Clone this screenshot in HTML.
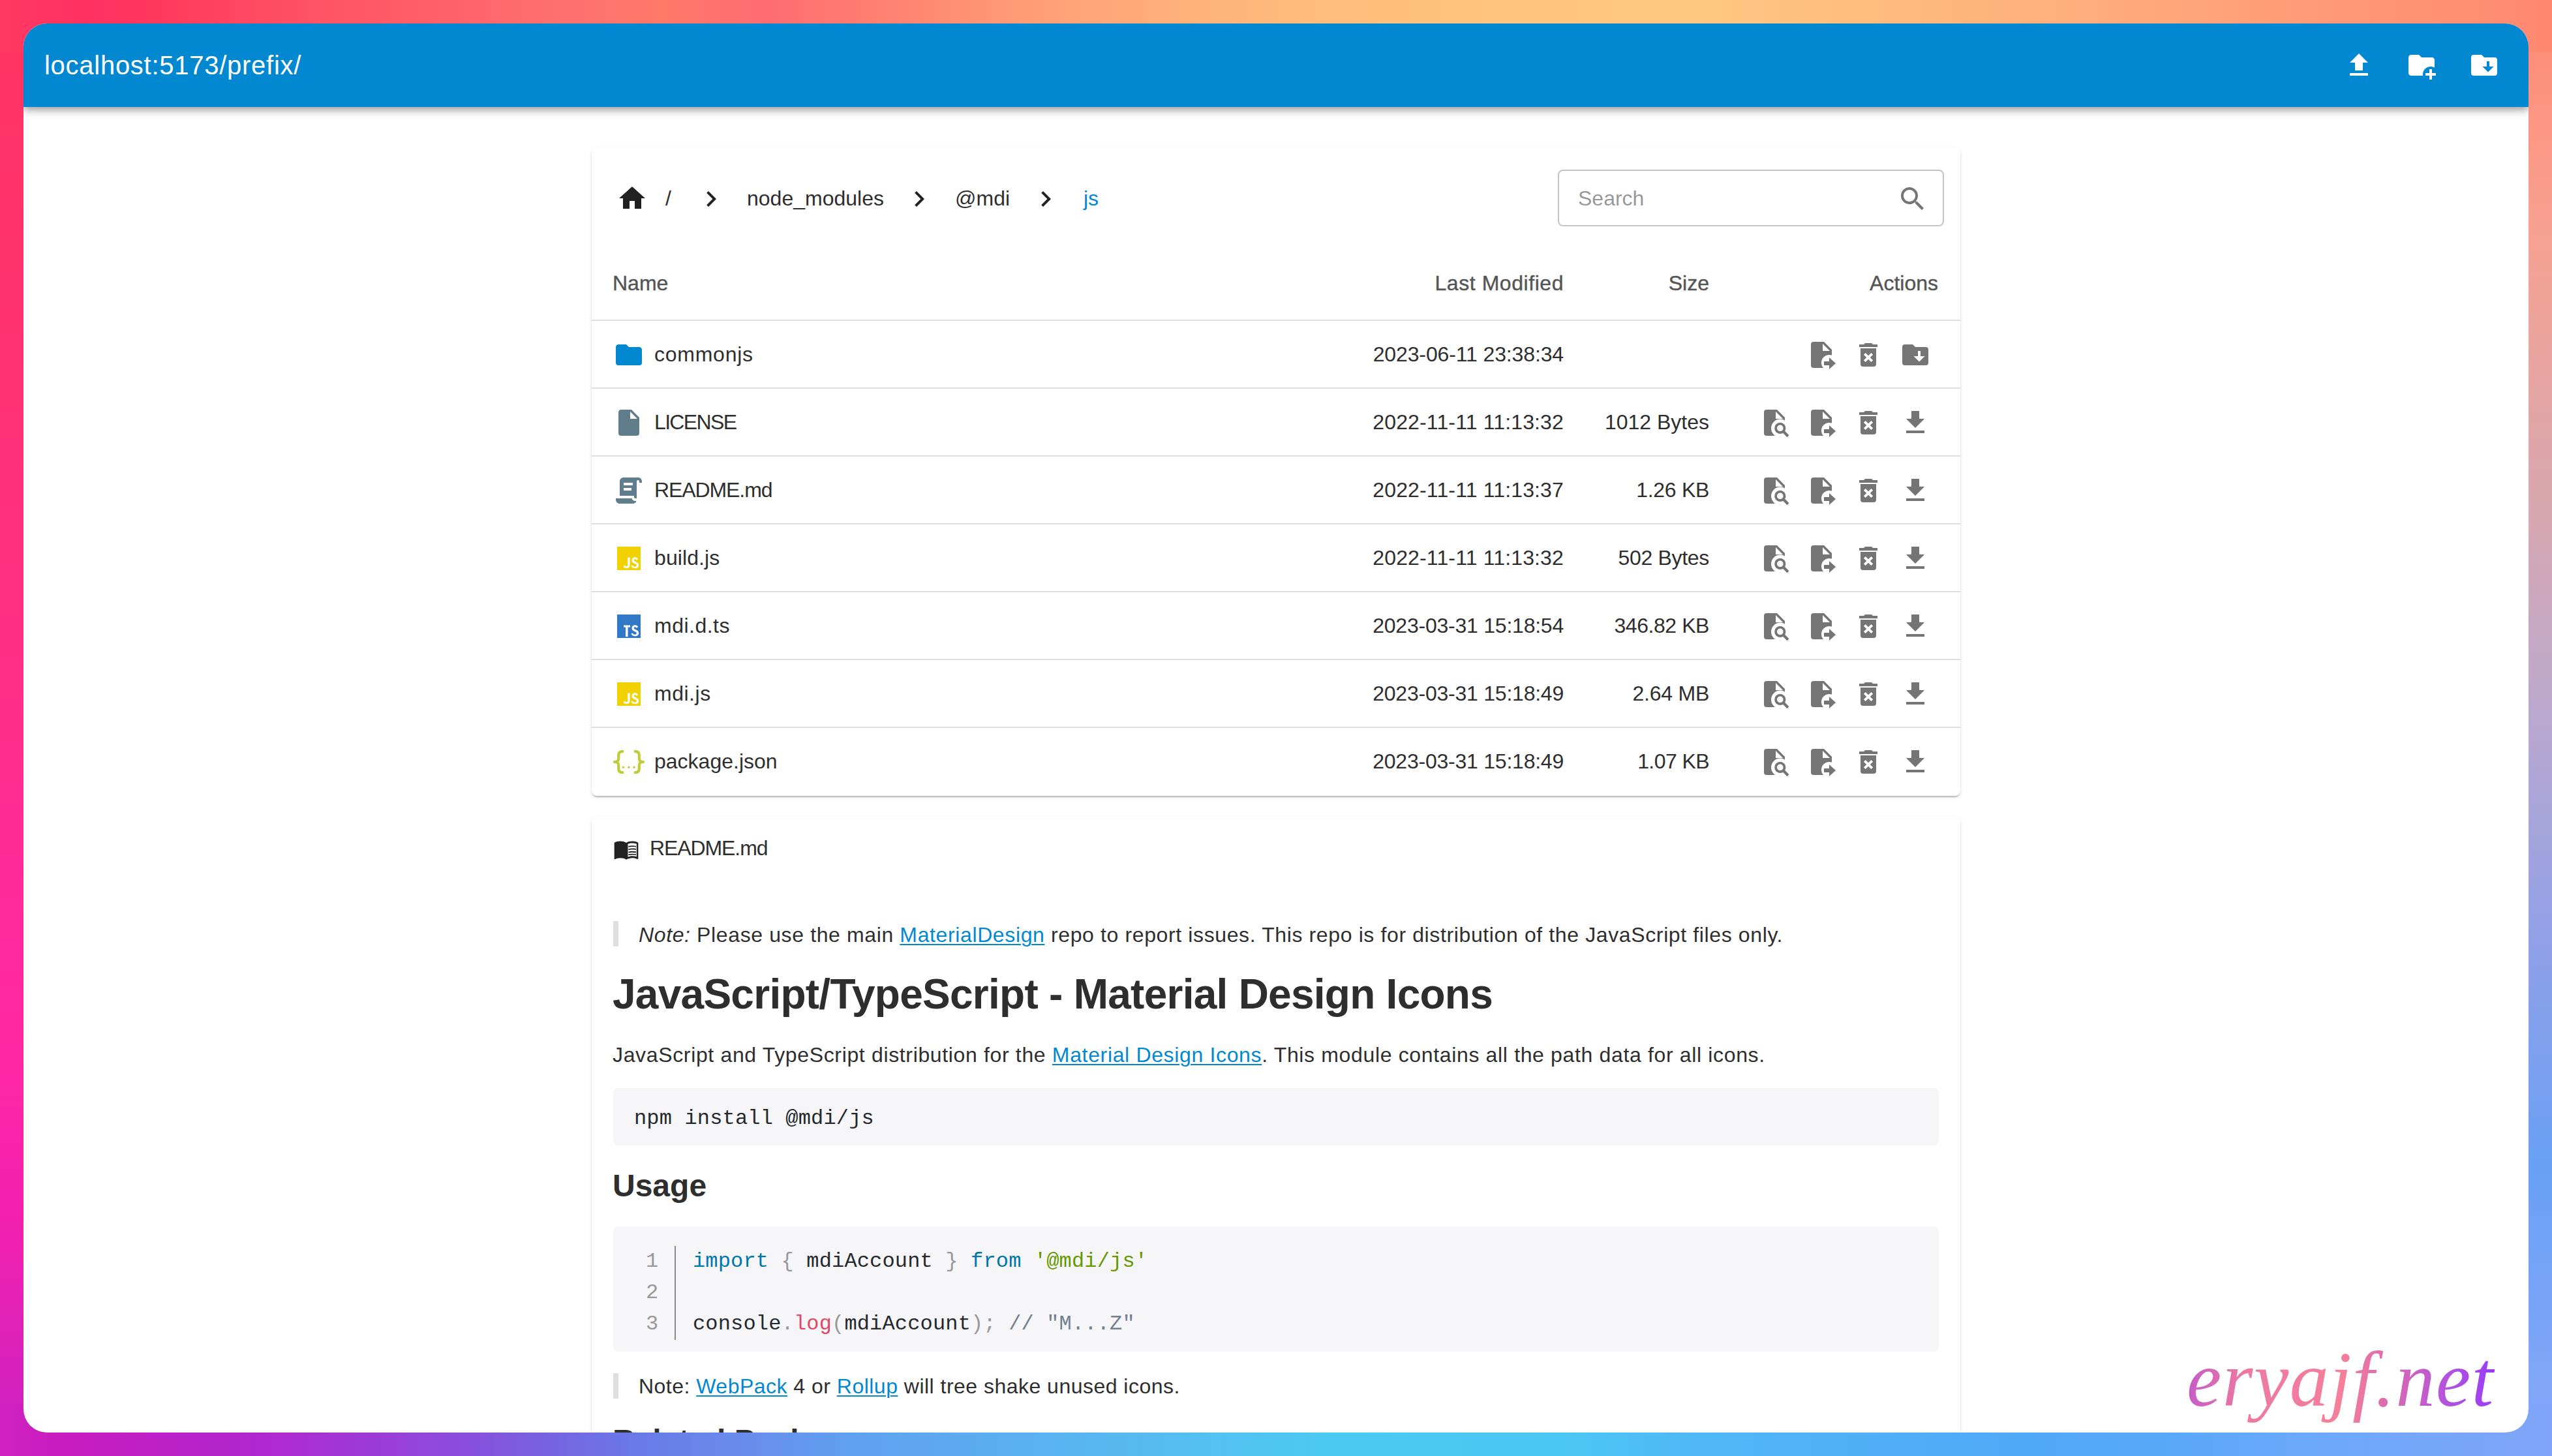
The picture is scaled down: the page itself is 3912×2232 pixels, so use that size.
<!DOCTYPE html>
<html><head><meta charset="utf-8">
<style>
*{box-sizing:border-box;margin:0;padding:0}
html,body{width:3912px;height:2232px;overflow:hidden}
body{position:relative;font-family:"Liberation Sans",sans-serif;background:#5ab0f5}
.bgs{position:absolute}
.bgL{left:0;top:0;width:80px;height:2232px;background:linear-gradient(to bottom,#ff3560 0%,#ff3370 20%,#ff3080 40%,#ff2c98 60%,#ff28a4 72%,#f020b0 85%,#c824c4 100%)}
.bgR{left:3832px;top:0;width:80px;height:2232px;background:linear-gradient(to bottom,#ff8a72 0%,#f8a090 15%,#d8a8b0 35%,#b8a8d0 50%,#90a0e8 65%,#6aa0f4 80%,#88a8f8 100%)}
.bgT{left:0;top:0;width:3912px;height:80px;background:linear-gradient(to right,#ff3a62 0%,#ff3060 3.2%,#ff3a5e 6.5%,#ff5066 11.7%,#ff6068 16.9%,#ff7070 22.1%,#ff7868 26%,#ff6c72 30%,#ff7a70 33.2%,#ffa078 41%,#ffb47a 47.5%,#ffc27c 55.4%,#ffc880 66.5%,#ffb87c 75.6%,#ffaa7c 83.5%,#ff9878 91.4%,#ff8870 100%)}
.bgB{left:0;top:2152px;width:3912px;height:80px;background:linear-gradient(to right,#d020c0 0%,#c81cc0 2.6%,#b028d0 10.4%,#9840d8 15.6%,#7a5ee0 20.8%,#6a78e8 24.7%,#6890ec 30%,#60a0f0 33.2%,#58b8f0 43.5%,#4ccaf2 52.4%,#4cc6f4 61.3%,#50b8f6 66.5%,#50a8f6 79.2%,#58a8f8 84.4%,#70a8fa 92%,#80a5f8 100%)}
.win{position:absolute;left:36px;top:36px;width:3840px;height:2160px;border-radius:36px;overflow:hidden;background:#fff}
.appbar{position:absolute;left:0;top:0;width:3840px;height:128px;background:#0288d1;z-index:5;
 box-shadow:0 4px 8px -2px rgba(0,0,0,.2),0 8px 10px 0 rgba(0,0,0,.14),0 2px 20px 0 rgba(0,0,0,.12)}
.title{position:absolute;left:32px;top:0;height:128px;line-height:128px;color:#fff;font-size:40px;white-space:nowrap}
.ico{position:absolute;width:48px;height:48px}
.ico svg{width:48px;height:48px;display:block}
.card{position:absolute;left:871px;width:2098px;background:#fff;border-radius:8px;
 box-shadow:0 4px 2px -2px rgba(0,0,0,.13),0 2px 2px 0 rgba(0,0,0,.1),0 2px 6px 0 rgba(0,0,0,.1)}
.t{position:absolute;white-space:nowrap;font-size:32px;line-height:48px;color:#2e2e2e}
.hdr{color:#555;-webkit-text-stroke:0.4px #555}
.div{position:absolute;left:0;width:2098px;height:2px;background:#e0e0e0}
.r{text-align:right}

.bq{position:absolute;left:33px;width:8px;height:39px;background:#dfdfdf}
.md{color:#2e2e2e}
.md a{color:#0288d1;text-decoration:underline;text-underline-offset:3px;text-decoration-thickness:2px}
.h1{font-size:64px;font-weight:bold;line-height:80px}
.h2{font-size:48px;font-weight:bold;line-height:64px}
.code{position:absolute;left:33px;width:2032px;background:#f6f6f8;border-radius:8px}
.mono{position:absolute;white-space:nowrap;font-family:"Liberation Mono",monospace;font-size:32px;line-height:48px;color:#24292e;letter-spacing:0.16px}
.ln{color:#999}
.kw{color:#07a}.pu{color:#999}.st{color:#690}.fn{color:#dd4a68}.cm{color:#708090}
</style></head><body>
<div class="bgs bgL"></div><div class="bgs bgR"></div><div class="bgs bgT"></div><div class="bgs bgB"></div>
<div class="win">
 <div class="appbar">
  <div class="title" id="title" style="letter-spacing:0.73px">localhost:5173/prefix/</div>
  <div class="ico" style="left:3556px;top:40px"><svg viewBox="0 0 24 24"><path fill="#fff" d="M9,16V10H5L12,3L19,10H15V16H9M5,20V18H19V20H5Z"/></svg></div>
  <div class="ico" style="left:3652px;top:40px"><svg viewBox="0 0 24 24"><path fill="#fff" d="M13 19C13 19.34 13.04 19.67 13.09 20H4C2.9 20 2 19.11 2 18V6C2 4.89 2.89 4 4 4H10L12 6H20C21.1 6 22 6.89 22 8V13.81C21.12 13.3 20.1 13 19 13C15.690 13 13 15.69 13 19M20 18V15H18V18H15V20H18V23H20V20H23V18H20Z"/></svg></div>
  <div class="ico" style="left:3748px;top:40px"><svg viewBox="0 0 24 24"><path fill="#fff" d="M20,6A2,2 0 0,1 22,8V18A2,2 0 0,1 20,20H4A2,2 0 0,1 2,18V6A2,2 0 0,1 4,4H10L12,6H20M19.25,13H16V9H14V13H10.75L15,17.25L19.25,13Z"/></svg></div>
 </div>

 <div class="card" id="card1" style="top:190px;height:994px">
  <!-- breadcrumb -->
  <div class="ico" style="left:38px;top:54px"><svg viewBox="0 0 24 24"><path fill="#212121" d="M10,20V14H14V20H19V12H22L12,3L2,12H5V20H10Z"/></svg></div>
  <div class="t" id="bc0" style="left:113px;top:54px">/</div>
  <div class="ico" style="left:159px;top:55px"><svg viewBox="0 0 24 24"><path fill="#212121" d="M8.59,16.58L13.17,12L8.59,7.41L10,6L16,12L10,18L8.59,16.58Z"/></svg></div>
  <div class="t" id="bc1" style="left:238px;top:54px">node_modules</div>
  <div class="ico" style="left:478px;top:55px"><svg viewBox="0 0 24 24"><path fill="#212121" d="M8.59,16.58L13.17,12L8.59,7.41L10,6L16,12L10,18L8.59,16.58Z"/></svg></div>
  <div class="t" id="bc2" style="left:557px;top:54px">@mdi</div>
  <div class="ico" style="left:672px;top:55px"><svg viewBox="0 0 24 24"><path fill="#212121" d="M8.59,16.58L13.17,12L8.59,7.41L10,6L16,12L10,18L8.59,16.58Z"/></svg></div>
  <div class="t" id="bc3" style="left:754px;top:54px;color:#0288d1">js</div>
  <!-- search -->
  <div style="position:absolute;left:1481px;top:34px;width:592px;height:87px;border:2px solid #c4c4c4;border-radius:8px"></div>
  <div class="t" id="srch" style="left:1512px;top:54px;color:rgba(0,0,0,.42)">Search</div>
  <div class="ico" style="left:2001px;top:55px"><svg viewBox="0 0 24 24"><path fill="#757575" d="M9.5,3A6.5,6.5 0 0,1 16,9.5C16,11.11 15.41,12.59 14.44,13.73L14.71,14H15.5L20.5,19L19,20.5L14,15.5V14.71L13.73,14.44C12.59,15.41 11.11,16 9.5,16A6.5,6.5 0 0,1 3,9.5A6.5,6.5 0 0,1 9.5,3M9.5,5C7,5 5,7 5,9.5C5,12 7,14 9.5,14C12,14 14,12 14,9.5C14,7 12,5 9.5,5Z"/></svg></div>
  <!-- header -->
  <div class="t hdr" style="left:32px;top:184px">Name</div>
  <div class="t hdr r" style="right:608px;top:184px;letter-spacing:0.55px">Last Modified</div>
  <div class="t hdr r" style="right:385px;top:184px">Size</div>
  <div class="t hdr r" style="right:34px;top:184px">Actions</div>
  <div class="div" style="top:264px"></div>
  <div class="ico" style="left:33px;top:294px;width:48px;height:48px"><svg viewBox="0 0 24 24"><path fill="#0288d1" d="M10,4H4C2.89,4 2,4.89 2,6V18A2,2 0 0,0 4,20H20A2,2 0 0,0 22,18V8C22,6.89 21.1,6 20,6H12L10,4Z"/></svg></div>
  <div class="t" style="left:96px;top:293px;letter-spacing:0.75px">commonjs</div>
  <div class="t r" style="right:608px;top:293px;letter-spacing:-0.13px">2023-06-11 23:38:34</div>
  <div class="ico" style="left:1861px;top:294px;width:48px;height:48px"><svg viewBox="0 0 24 24"><defs><mask id="mfm0"><rect width="24" height="24" fill="#fff"/><circle cx="18" cy="18" r="6" fill="#000"/><path d="M13,9V3.5L18.5,9Z" fill="#000"/></mask></defs><path mask="url(#mfm0)" fill="#757575" d="M6,2H14L20,8V20A2,2 0 0,1 18,22H6A2,2 0 0,1 4,20V4A2,2 0 0,1 6,2Z"/><path fill="#757575" d="M14,17H18V14L23,18.5L18,23V20H14V17Z"/></svg></div>
  <div class="ico" style="left:1933px;top:294px;width:48px;height:48px"><svg viewBox="0 0 24 24"><path fill="#757575" d="M6,19A2,2 0 0,0 8,21H16A2,2 0 0,0 18,19V7H6V19M8.46,11.88L9.87,10.47L12,12.59L14.12,10.47L15.53,11.88L13.41,14L15.53,16.12L14.12,17.53L12,15.41L9.88,17.53L8.47,16.12L10.59,14L8.46,11.88M15.5,4L14.5,3H9.5L8.5,4H5V6H19V4H15.5Z"/></svg></div>
  <div class="ico" style="left:2005px;top:294px;width:48px;height:48px"><svg viewBox="0 0 24 24"><path fill="#757575" d="M20,6A2,2 0 0,1 22,8V18A2,2 0 0,1 20,20H4A2,2 0 0,1 2,18V6A2,2 0 0,1 4,4H10L12,6H20M19.25,13H16V9H14V13H10.75L15,17.25L19.25,13Z"/></svg></div>
  <div class="div" style="top:368px"></div>
  <div class="ico" style="left:33px;top:398px;width:48px;height:48px"><svg viewBox="0 0 24 24"><path fill="#607d8b" d="M13,9V3.5L18.5,9M6,2C4.89,2 4,2.89 4,4V20A2,2 0 0,0 6,22H18A2,2 0 0,0 20,20V8L14,2H6Z"/></svg></div>
  <div class="t" style="left:96px;top:397px;letter-spacing:-1.66px">LICENSE</div>
  <div class="t r" style="right:608px;top:397px;letter-spacing:0.14px">2022-11-11 11:13:32</div>
  <div class="t r" style="right:385px;top:397px;letter-spacing:0px">1012 Bytes</div>
  <div class="ico" style="left:1789px;top:398px;width:48px;height:48px"><svg viewBox="0 0 24 24"><defs><mask id="mfs1"><rect width="24" height="24" fill="#fff"/><circle cx="16.4" cy="16.2" r="6.9" fill="#000"/><path d="M13,9V3.5L18.5,9Z" fill="#000"/></mask></defs><path mask="url(#mfs1)" fill="#757575" d="M6,2H14L20,8V20A2,2 0 0,1 18,22H6A2,2 0 0,1 4,20V4A2,2 0 0,1 6,2Z"/><circle cx="16.4" cy="16.2" r="3.35" fill="none" stroke="#757575" stroke-width="1.9"/><path d="M18.8,18.6L22.5,22.4" stroke="#757575" stroke-width="2.1" stroke-linecap="butt"/></svg></div>
  <div class="ico" style="left:1861px;top:398px;width:48px;height:48px"><svg viewBox="0 0 24 24"><defs><mask id="mfm1"><rect width="24" height="24" fill="#fff"/><circle cx="18" cy="18" r="6" fill="#000"/><path d="M13,9V3.5L18.5,9Z" fill="#000"/></mask></defs><path mask="url(#mfm1)" fill="#757575" d="M6,2H14L20,8V20A2,2 0 0,1 18,22H6A2,2 0 0,1 4,20V4A2,2 0 0,1 6,2Z"/><path fill="#757575" d="M14,17H18V14L23,18.5L18,23V20H14V17Z"/></svg></div>
  <div class="ico" style="left:1933px;top:398px;width:48px;height:48px"><svg viewBox="0 0 24 24"><path fill="#757575" d="M6,19A2,2 0 0,0 8,21H16A2,2 0 0,0 18,19V7H6V19M8.46,11.88L9.87,10.47L12,12.59L14.12,10.47L15.53,11.88L13.41,14L15.53,16.12L14.12,17.53L12,15.41L9.88,17.53L8.47,16.12L10.59,14L8.46,11.88M15.5,4L14.5,3H9.5L8.5,4H5V6H19V4H15.5Z"/></svg></div>
  <div class="ico" style="left:2005px;top:398px;width:48px;height:48px"><svg viewBox="0 0 24 24"><path fill="#757575" d="M5,20H19V18H5M19,9H15V3H9V9H5L12,16L19,9Z"/></svg></div>
  <div class="div" style="top:472px"></div>
  <div class="ico" style="left:33px;top:502px;width:48px;height:48px"><svg viewBox="0 0 24 24"><path fill="#607d8b" d="M17.8,20C17.4,21.2 16.3,22 15,22H5C3.3,22 2,20.7 2,19V18H5L14.2,18C14.6,19.2 15.7,20 17,20H17.8M19,2C20.7,2 22,3.3 22,5V6H20V5C20,4.4 19.6,4 19,4C18.4,4 18,4.4 18,5V18H17C16.4,18 16,17.6 16,17V16H5V5C5,3.3 6.3,2 8,2H19M8,6V8H15V6H8M8,10V12H14V10H8Z"/></svg></div>
  <div class="t" style="left:96px;top:501px;letter-spacing:-1.09px">README.md</div>
  <div class="t r" style="right:608px;top:501px;letter-spacing:0.14px">2022-11-11 11:13:37</div>
  <div class="t r" style="right:385px;top:501px;letter-spacing:-0.3px">1.26 KB</div>
  <div class="ico" style="left:1789px;top:502px;width:48px;height:48px"><svg viewBox="0 0 24 24"><defs><mask id="mfs2"><rect width="24" height="24" fill="#fff"/><circle cx="16.4" cy="16.2" r="6.9" fill="#000"/><path d="M13,9V3.5L18.5,9Z" fill="#000"/></mask></defs><path mask="url(#mfs2)" fill="#757575" d="M6,2H14L20,8V20A2,2 0 0,1 18,22H6A2,2 0 0,1 4,20V4A2,2 0 0,1 6,2Z"/><circle cx="16.4" cy="16.2" r="3.35" fill="none" stroke="#757575" stroke-width="1.9"/><path d="M18.8,18.6L22.5,22.4" stroke="#757575" stroke-width="2.1" stroke-linecap="butt"/></svg></div>
  <div class="ico" style="left:1861px;top:502px;width:48px;height:48px"><svg viewBox="0 0 24 24"><defs><mask id="mfm2"><rect width="24" height="24" fill="#fff"/><circle cx="18" cy="18" r="6" fill="#000"/><path d="M13,9V3.5L18.5,9Z" fill="#000"/></mask></defs><path mask="url(#mfm2)" fill="#757575" d="M6,2H14L20,8V20A2,2 0 0,1 18,22H6A2,2 0 0,1 4,20V4A2,2 0 0,1 6,2Z"/><path fill="#757575" d="M14,17H18V14L23,18.5L18,23V20H14V17Z"/></svg></div>
  <div class="ico" style="left:1933px;top:502px;width:48px;height:48px"><svg viewBox="0 0 24 24"><path fill="#757575" d="M6,19A2,2 0 0,0 8,21H16A2,2 0 0,0 18,19V7H6V19M8.46,11.88L9.87,10.47L12,12.59L14.12,10.47L15.53,11.88L13.41,14L15.53,16.12L14.12,17.53L12,15.41L9.88,17.53L8.47,16.12L10.59,14L8.46,11.88M15.5,4L14.5,3H9.5L8.5,4H5V6H19V4H15.5Z"/></svg></div>
  <div class="ico" style="left:2005px;top:502px;width:48px;height:48px"><svg viewBox="0 0 24 24"><path fill="#757575" d="M5,20H19V18H5M19,9H15V3H9V9H5L12,16L19,9Z"/></svg></div>
  <div class="div" style="top:576px"></div>
  <div class="ico" style="left:33px;top:606px;width:48px;height:48px"><svg viewBox="0 0 24 24"><path fill="#f1d200" d="M3,3H21V21H3V3M7.73,18.04C8.13,18.89 8.92,19.59 10.27,19.59C11.77,19.59 12.8,18.79 12.8,17.04V11.26H11.1V17C11.1,17.86 10.75,18.08 10.2,18.08C9.62,18.08 9.38,17.68 9.11,17.21L7.73,18.04M13.71,17.86C14.21,18.84 15.22,19.59 16.8,19.59C18.4,19.59 19.6,18.76 19.6,17.23C19.6,15.82 18.79,15.19 17.35,14.57L16.93,14.39C16.2,14.08 15.89,13.87 15.89,13.37C15.89,12.96 16.2,12.64 16.7,12.64C17.18,12.64 17.5,12.85 17.79,13.37L19.1,12.5C18.55,11.54 17.77,11.17 16.7,11.17C15.19,11.17 14.22,12.13 14.22,13.4C14.22,14.78 15.03,15.43 16.25,15.95L16.67,16.13C17.45,16.5 17.91,16.72 17.91,17.38C17.91,17.93 17.4,18.33 16.61,18.33C15.68,18.33 15.15,17.85 14.74,17.18L13.71,17.86Z"/></svg></div>
  <div class="t" style="left:96px;top:605px;letter-spacing:0.1px">build.js</div>
  <div class="t r" style="right:608px;top:605px;letter-spacing:0.14px">2022-11-11 11:13:32</div>
  <div class="t r" style="right:385px;top:605px;letter-spacing:-0.31px">502 Bytes</div>
  <div class="ico" style="left:1789px;top:606px;width:48px;height:48px"><svg viewBox="0 0 24 24"><defs><mask id="mfs3"><rect width="24" height="24" fill="#fff"/><circle cx="16.4" cy="16.2" r="6.9" fill="#000"/><path d="M13,9V3.5L18.5,9Z" fill="#000"/></mask></defs><path mask="url(#mfs3)" fill="#757575" d="M6,2H14L20,8V20A2,2 0 0,1 18,22H6A2,2 0 0,1 4,20V4A2,2 0 0,1 6,2Z"/><circle cx="16.4" cy="16.2" r="3.35" fill="none" stroke="#757575" stroke-width="1.9"/><path d="M18.8,18.6L22.5,22.4" stroke="#757575" stroke-width="2.1" stroke-linecap="butt"/></svg></div>
  <div class="ico" style="left:1861px;top:606px;width:48px;height:48px"><svg viewBox="0 0 24 24"><defs><mask id="mfm3"><rect width="24" height="24" fill="#fff"/><circle cx="18" cy="18" r="6" fill="#000"/><path d="M13,9V3.5L18.5,9Z" fill="#000"/></mask></defs><path mask="url(#mfm3)" fill="#757575" d="M6,2H14L20,8V20A2,2 0 0,1 18,22H6A2,2 0 0,1 4,20V4A2,2 0 0,1 6,2Z"/><path fill="#757575" d="M14,17H18V14L23,18.5L18,23V20H14V17Z"/></svg></div>
  <div class="ico" style="left:1933px;top:606px;width:48px;height:48px"><svg viewBox="0 0 24 24"><path fill="#757575" d="M6,19A2,2 0 0,0 8,21H16A2,2 0 0,0 18,19V7H6V19M8.46,11.88L9.87,10.47L12,12.59L14.12,10.47L15.53,11.88L13.41,14L15.53,16.12L14.12,17.53L12,15.41L9.88,17.53L8.47,16.12L10.59,14L8.46,11.88M15.5,4L14.5,3H9.5L8.5,4H5V6H19V4H15.5Z"/></svg></div>
  <div class="ico" style="left:2005px;top:606px;width:48px;height:48px"><svg viewBox="0 0 24 24"><path fill="#757575" d="M5,20H19V18H5M19,9H15V3H9V9H5L12,16L19,9Z"/></svg></div>
  <div class="div" style="top:680px"></div>
  <div class="ico" style="left:33px;top:710px;width:48px;height:48px"><svg viewBox="0 0 24 24"><path fill="#3178c6" d="M3,3H21V21H3V3M13.71,17.86C14.21,18.84 15.22,19.59 16.8,19.59C18.4,19.59 19.6,18.76 19.6,17.23C19.6,15.82 18.79,15.19 17.35,14.57L16.93,14.39C16.2,14.08 15.89,13.87 15.89,13.37C15.89,12.96 16.2,12.64 16.7,12.64C17.18,12.64 17.5,12.85 17.79,13.37L19.1,12.5C18.55,11.54 17.77,11.17 16.7,11.17C15.19,11.17 14.22,12.13 14.22,13.4C14.22,14.78 15.03,15.43 16.25,15.95L16.67,16.13C17.45,16.5 17.91,16.72 17.91,17.38C17.91,17.93 17.4,18.33 16.61,18.33C15.68,18.33 15.15,17.85 14.74,17.18L13.71,17.86M13,11.25H8V12.75H9.5V20H11.25V12.75H13V11.25Z"/></svg></div>
  <div class="t" style="left:96px;top:709px;letter-spacing:0.49px">mdi.d.ts</div>
  <div class="t r" style="right:608px;top:709px;letter-spacing:-0.23px">2023-03-31 15:18:54</div>
  <div class="t r" style="right:385px;top:709px;letter-spacing:-0.43px">346.82 KB</div>
  <div class="ico" style="left:1789px;top:710px;width:48px;height:48px"><svg viewBox="0 0 24 24"><defs><mask id="mfs4"><rect width="24" height="24" fill="#fff"/><circle cx="16.4" cy="16.2" r="6.9" fill="#000"/><path d="M13,9V3.5L18.5,9Z" fill="#000"/></mask></defs><path mask="url(#mfs4)" fill="#757575" d="M6,2H14L20,8V20A2,2 0 0,1 18,22H6A2,2 0 0,1 4,20V4A2,2 0 0,1 6,2Z"/><circle cx="16.4" cy="16.2" r="3.35" fill="none" stroke="#757575" stroke-width="1.9"/><path d="M18.8,18.6L22.5,22.4" stroke="#757575" stroke-width="2.1" stroke-linecap="butt"/></svg></div>
  <div class="ico" style="left:1861px;top:710px;width:48px;height:48px"><svg viewBox="0 0 24 24"><defs><mask id="mfm4"><rect width="24" height="24" fill="#fff"/><circle cx="18" cy="18" r="6" fill="#000"/><path d="M13,9V3.5L18.5,9Z" fill="#000"/></mask></defs><path mask="url(#mfm4)" fill="#757575" d="M6,2H14L20,8V20A2,2 0 0,1 18,22H6A2,2 0 0,1 4,20V4A2,2 0 0,1 6,2Z"/><path fill="#757575" d="M14,17H18V14L23,18.5L18,23V20H14V17Z"/></svg></div>
  <div class="ico" style="left:1933px;top:710px;width:48px;height:48px"><svg viewBox="0 0 24 24"><path fill="#757575" d="M6,19A2,2 0 0,0 8,21H16A2,2 0 0,0 18,19V7H6V19M8.46,11.88L9.87,10.47L12,12.59L14.12,10.47L15.53,11.88L13.41,14L15.53,16.12L14.12,17.53L12,15.41L9.88,17.53L8.47,16.12L10.59,14L8.46,11.88M15.5,4L14.5,3H9.5L8.5,4H5V6H19V4H15.5Z"/></svg></div>
  <div class="ico" style="left:2005px;top:710px;width:48px;height:48px"><svg viewBox="0 0 24 24"><path fill="#757575" d="M5,20H19V18H5M19,9H15V3H9V9H5L12,16L19,9Z"/></svg></div>
  <div class="div" style="top:784px"></div>
  <div class="ico" style="left:33px;top:814px;width:48px;height:48px"><svg viewBox="0 0 24 24"><path fill="#f1d200" d="M3,3H21V21H3V3M7.73,18.04C8.13,18.89 8.92,19.59 10.27,19.59C11.77,19.59 12.8,18.79 12.8,17.04V11.26H11.1V17C11.1,17.86 10.75,18.08 10.2,18.08C9.62,18.08 9.38,17.68 9.11,17.21L7.73,18.04M13.71,17.86C14.21,18.84 15.22,19.59 16.8,19.59C18.4,19.59 19.6,18.76 19.6,17.23C19.6,15.82 18.79,15.19 17.35,14.57L16.93,14.39C16.2,14.08 15.89,13.87 15.89,13.37C15.89,12.96 16.2,12.64 16.7,12.64C17.18,12.64 17.5,12.85 17.79,13.37L19.1,12.5C18.55,11.54 17.77,11.17 16.7,11.17C15.19,11.17 14.22,12.13 14.22,13.4C14.22,14.78 15.03,15.43 16.25,15.95L16.67,16.13C17.45,16.5 17.91,16.72 17.91,17.38C17.91,17.93 17.4,18.33 16.61,18.33C15.68,18.33 15.15,17.85 14.74,17.18L13.71,17.86Z"/></svg></div>
  <div class="t" style="left:96px;top:813px;letter-spacing:0.52px">mdi.js</div>
  <div class="t r" style="right:608px;top:813px;letter-spacing:-0.23px">2023-03-31 15:18:49</div>
  <div class="t r" style="right:385px;top:813px;letter-spacing:-0.23px">2.64 MB</div>
  <div class="ico" style="left:1789px;top:814px;width:48px;height:48px"><svg viewBox="0 0 24 24"><defs><mask id="mfs5"><rect width="24" height="24" fill="#fff"/><circle cx="16.4" cy="16.2" r="6.9" fill="#000"/><path d="M13,9V3.5L18.5,9Z" fill="#000"/></mask></defs><path mask="url(#mfs5)" fill="#757575" d="M6,2H14L20,8V20A2,2 0 0,1 18,22H6A2,2 0 0,1 4,20V4A2,2 0 0,1 6,2Z"/><circle cx="16.4" cy="16.2" r="3.35" fill="none" stroke="#757575" stroke-width="1.9"/><path d="M18.8,18.6L22.5,22.4" stroke="#757575" stroke-width="2.1" stroke-linecap="butt"/></svg></div>
  <div class="ico" style="left:1861px;top:814px;width:48px;height:48px"><svg viewBox="0 0 24 24"><defs><mask id="mfm5"><rect width="24" height="24" fill="#fff"/><circle cx="18" cy="18" r="6" fill="#000"/><path d="M13,9V3.5L18.5,9Z" fill="#000"/></mask></defs><path mask="url(#mfm5)" fill="#757575" d="M6,2H14L20,8V20A2,2 0 0,1 18,22H6A2,2 0 0,1 4,20V4A2,2 0 0,1 6,2Z"/><path fill="#757575" d="M14,17H18V14L23,18.5L18,23V20H14V17Z"/></svg></div>
  <div class="ico" style="left:1933px;top:814px;width:48px;height:48px"><svg viewBox="0 0 24 24"><path fill="#757575" d="M6,19A2,2 0 0,0 8,21H16A2,2 0 0,0 18,19V7H6V19M8.46,11.88L9.87,10.47L12,12.59L14.12,10.47L15.53,11.88L13.41,14L15.53,16.12L14.12,17.53L12,15.41L9.88,17.53L8.47,16.12L10.59,14L8.46,11.88M15.5,4L14.5,3H9.5L8.5,4H5V6H19V4H15.5Z"/></svg></div>
  <div class="ico" style="left:2005px;top:814px;width:48px;height:48px"><svg viewBox="0 0 24 24"><path fill="#757575" d="M5,20H19V18H5M19,9H15V3H9V9H5L12,16L19,9Z"/></svg></div>
  <div class="div" style="top:888px"></div>
  <div class="ico" style="left:33px;top:918px;width:48px;height:48px"><svg viewBox="0 0 24 24"><path fill="none" stroke="#c0cc3a" stroke-width="2.1" stroke-linecap="round" stroke-linejoin="round" d="M7.2,3.9C5.2,3.9 4.1,4.8 4.1,6.8V9.6C4.1,11 3.2,11.9 1.0,12C3.2,12.1 4.1,13 4.1,14.4V17.2C4.1,19.2 5.2,20.1 7.2,20.1"/><path fill="none" stroke="#c0cc3a" stroke-width="2.1" stroke-linecap="round" stroke-linejoin="round" d="M16.8,3.9C18.8,3.9 19.9,4.8 19.9,6.8V9.6C19.9,11 20.8,11.9 23,12C20.8,12.1 19.9,13 19.9,14.4V17.2C19.9,19.2 18.8,20.1 16.8,20.1"/><circle cx="7.7" cy="16.1" r="0.9" fill="#c0cc3a"/><circle cx="11.9" cy="16.1" r="0.9" fill="#c0cc3a"/><circle cx="16" cy="16.1" r="0.9" fill="#c0cc3a"/></svg></div>
  <div class="t" style="left:96px;top:917px;letter-spacing:0px">package.json</div>
  <div class="t r" style="right:608px;top:917px;letter-spacing:-0.23px">2023-03-31 15:18:49</div>
  <div class="t r" style="right:385px;top:917px;letter-spacing:-0.57px">1.07 KB</div>
  <div class="ico" style="left:1789px;top:918px;width:48px;height:48px"><svg viewBox="0 0 24 24"><defs><mask id="mfs6"><rect width="24" height="24" fill="#fff"/><circle cx="16.4" cy="16.2" r="6.9" fill="#000"/><path d="M13,9V3.5L18.5,9Z" fill="#000"/></mask></defs><path mask="url(#mfs6)" fill="#757575" d="M6,2H14L20,8V20A2,2 0 0,1 18,22H6A2,2 0 0,1 4,20V4A2,2 0 0,1 6,2Z"/><circle cx="16.4" cy="16.2" r="3.35" fill="none" stroke="#757575" stroke-width="1.9"/><path d="M18.8,18.6L22.5,22.4" stroke="#757575" stroke-width="2.1" stroke-linecap="butt"/></svg></div>
  <div class="ico" style="left:1861px;top:918px;width:48px;height:48px"><svg viewBox="0 0 24 24"><defs><mask id="mfm6"><rect width="24" height="24" fill="#fff"/><circle cx="18" cy="18" r="6" fill="#000"/><path d="M13,9V3.5L18.5,9Z" fill="#000"/></mask></defs><path mask="url(#mfm6)" fill="#757575" d="M6,2H14L20,8V20A2,2 0 0,1 18,22H6A2,2 0 0,1 4,20V4A2,2 0 0,1 6,2Z"/><path fill="#757575" d="M14,17H18V14L23,18.5L18,23V20H14V17Z"/></svg></div>
  <div class="ico" style="left:1933px;top:918px;width:48px;height:48px"><svg viewBox="0 0 24 24"><path fill="#757575" d="M6,19A2,2 0 0,0 8,21H16A2,2 0 0,0 18,19V7H6V19M8.46,11.88L9.87,10.47L12,12.59L14.12,10.47L15.53,11.88L13.41,14L15.53,16.12L14.12,17.53L12,15.41L9.88,17.53L8.47,16.12L10.59,14L8.46,11.88M15.5,4L14.5,3H9.5L8.5,4H5V6H19V4H15.5Z"/></svg></div>
  <div class="ico" style="left:2005px;top:918px;width:48px;height:48px"><svg viewBox="0 0 24 24"><path fill="#757575" d="M5,20H19V18H5M19,9H15V3H9V9H5L12,16L19,9Z"/></svg></div>
 </div>

 <div class="card" id="card2" style="top:1216px;height:1200px">
  <div class="ico" style="left:33px;top:30px;width:40px;height:40px"><svg viewBox="0 0 24 24" width="40" height="40" style="width:40px;height:40px"><path fill="#212121" d="M1,6C2.45,4.9 4.55,4.5 6.5,4.5C8.45,4.5 10.55,4.9 12,6V21.5C10.55,20.4 8.45,20 6.5,20C5.05,20 3.1,20.45 1.75,21.1C1.65,21.1 1.6,21.15 1.5,21.15C1.25,21.15 1,20.9 1,20.65V6Z"/><path fill="#212121" d="M12,6C13.45,4.9 15.55,4.5 17.5,4.5C18.67,4.5 19.89,4.65 21,5C21.75,5.25 22.4,5.55 23,6V20.6C23,20.85 22.75,21.1 22.5,21.1C22.4,21.1 22.35,21.1 22.25,21.05C20.85,20.3 19.15,20 17.5,20C15.8,20 13.35,20.65 12,21.5V6M13.5,7V19C14.8,18.4 16.2,18.1 17.5,18.1C18.9,18.1 20.2,18.3 21.5,18.7V6.9C20.3,6.5 18.9,6.3 17.5,6.3C16.1,6.3 14.7,6.6 13.5,7M14,8.9C15.2,8.6 16.4,8.5 17.5,8.5C18.7,8.5 19.9,8.6 21,8.8V9.9C19.9,9.7 18.7,9.6 17.5,9.6C16.4,9.6 15.2,9.7 14,10V8.9M14,11.5C15.2,11.2 16.4,11.1 17.5,11.1C18.7,11.1 19.9,11.2 21,11.4V12.5C19.9,12.3 18.7,12.2 17.5,12.2C16.4,12.2 15.2,12.3 14,12.6V11.5M14,14.1C15.2,13.8 16.4,13.7 17.5,13.7C18.7,13.7 19.9,13.8 21,14V15.1C19.9,14.9 18.7,14.8 17.5,14.8C16.4,14.8 15.2,14.9 14,15.2V14.1M14,16.4C15.2,16.1 16.4,16 17.5,16C18.7,16 19.9,16.1 21,16.3V17.4C19.9,17.2 18.7,17.1 17.5,17.1C16.4,17.1 15.2,17.2 14,17.5V16.4Z"/></svg></div>
  <div class="t" id="rmtitle" style="left:89px;top:24px;letter-spacing:-1.09px">README.md</div>
  <div class="bq" style="top:160px"></div>
  <div class="t md" id="note1" style="left:72px;top:157px;letter-spacing:0.62px"><i>Note:</i> Please use the main <a>MaterialDesign</a> repo to report issues. This repo is for distribution of the JavaScript files only.</div>
  <div class="t md h1" id="h1" style="left:32px;top:232px;letter-spacing:-0.74px">JavaScript/TypeScript - Material Design Icons</div>
  <div class="t md" id="p1" style="left:32px;top:341px;letter-spacing:0.65px">JavaScript and TypeScript distribution for the <a>Material Design Icons</a>. This module contains all the path data for all icons.</div>
  <div class="code" style="top:416px;height:88px"><div class="mono" id="npm" style="left:32px;top:23px">npm install @mdi/js</div></div>
  <div class="t md h2" id="h2" style="left:32px;top:534px">Usage</div>
  <div class="code" style="top:628px;height:192px">
   <div class="mono ln" style="left:50px;top:30px">1</div>
   <div class="mono ln" style="left:50px;top:78px">2</div>
   <div class="mono ln" style="left:50px;top:126px">3</div>
   <div style="position:absolute;left:94px;top:30px;width:2px;height:144px;background:#8a8a8a"></div>
   <div class="mono" id="code1" style="left:122px;top:30px"><span class="kw">import</span> <span class="pu">{</span> mdiAccount <span class="pu">}</span> <span class="kw">from</span> <span class="st">'@mdi/js'</span></div>
   <div class="mono" id="code3" style="left:122px;top:126px">console<span class="pu">.</span><span class="fn">log</span><span class="pu">(</span>mdiAccount<span class="pu">);</span> <span class="cm">// "M...Z"</span></div>
  </div>
  <div class="bq" style="top:853px"></div>
  <div class="t md" id="note2" style="left:72px;top:849px;letter-spacing:0.48px">Note: <a>WebPack</a> 4 or <a>Rollup</a> will tree shake unused icons.</div>
  <div class="t md h2" style="left:32px;top:925px">Related Packages</div>
 </div>
</div>

<div id="wm" style="position:absolute;left:3352px;top:2025px;font-family:'Liberation Serif',serif;font-style:italic;font-size:120px;letter-spacing:1.5px;line-height:180px;white-space:nowrap;background:linear-gradient(to right,#c45cc8 0%,#ec78a2 18%,#f5809a 50%,#da6ab0 66%,#b454dc 84%,#9a3cf8 100%);-webkit-background-clip:text;background-clip:text;color:transparent">eryajf.net</div>
</body></html>
